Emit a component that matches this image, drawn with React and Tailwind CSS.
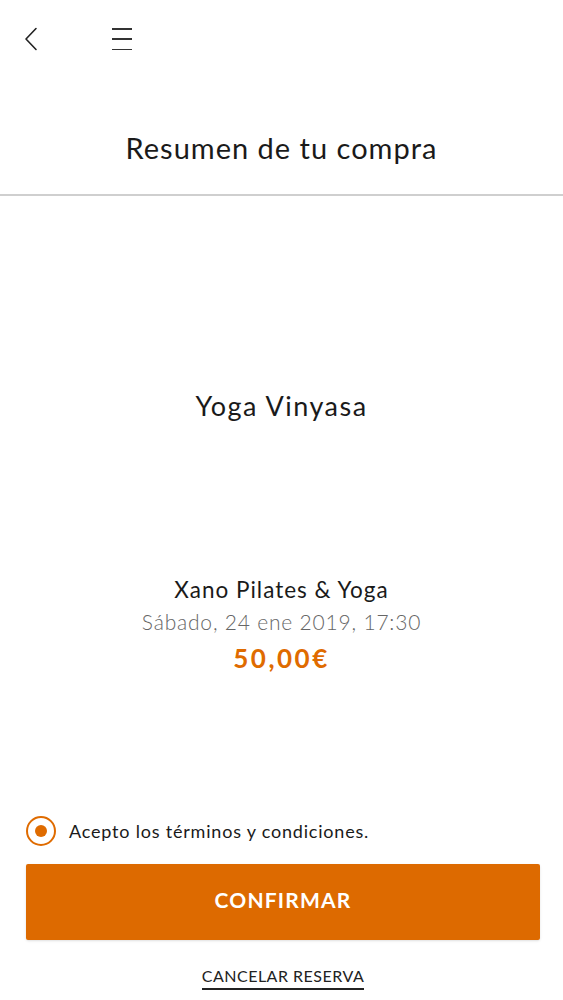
import React from "react";

export default function App() {
  const font = { fontFamily: "Lato, 'Open Sans', sans-serif" };

  return (
    <div className="w-[563px] h-[1000px] bg-white flex flex-col text-[#1a1a1a]" style={font}>
      {/* Top bar */}
      <div className="h-[78px] flex items-center pl-[22px]">
        <button className="w-[18px] h-[26px] flex items-center justify-center">
          <svg width="14" height="24" viewBox="0 0 14 24" fill="none">
            <path d="M12 1.5 L2 12 L12 22.5" stroke="#222" strokeWidth="1.6" strokeLinecap="round" strokeLinejoin="round" />
          </svg>
        </button>
        <button className="ml-[72px] w-[22px] h-[26px] flex flex-col justify-between py-[2px]">
          <span className="block h-[1.5px] w-[20px] bg-[#333]" />
          <span className="block h-[1.5px] w-[20px] bg-[#333]" />
          <span className="block h-[1.5px] w-[20px] bg-[#333]" />
        </button>
      </div>

      {/* Title */}
      <div className="h-[118px] flex items-center justify-center border-b-2 border-[#cfcfcf]">
        <h1 className="text-[29px] leading-none font-normal tracking-[1px] mt-[22px]">Resumen de tu compra</h1>
      </div>

      {/* Content */}
      <div className="flex-1 flex flex-col items-center">
        <h2 className="mt-[196px] text-[27px] leading-none font-normal tracking-[1.5px]">Yoga Vinyasa</h2>

        <div className="mt-[155px] flex flex-col items-center">
          <p className="text-[22.5px] leading-[31px] tracking-[1px]">Xano Pilates &amp; Yoga</p>
          <p className="text-[21px] leading-[33px] font-light tracking-[0.8px] text-[#666]">Sábado, 24 ene 2019, 17:30</p>
          <p className="text-[26px] leading-[40px] font-bold tracking-[2.5px] text-[#df6b00]">50,00€</p>
        </div>

        <div className="mt-auto w-full pl-[26px] pr-[23px] pb-[10px]">
          <label className="flex items-center gap-[13px] mb-[18px]">
            <span className="w-[30px] h-[30px] rounded-full border-2 border-[#df6b00] flex items-center justify-center">
              <span className="w-[12px] h-[12px] rounded-full bg-[#df6b00]" />
            </span>
            <span className="text-[18px] tracking-[0.8px]">Acepto los términos y condiciones.</span>
          </label>

          <button className="w-full h-[76px] pb-[4px] bg-[#dd6a00] rounded-[2px] text-white text-[21px] font-bold tracking-[1.2px] shadow-sm">
            CONFIRMAR
          </button>

          <div className="flex justify-center mt-[26px]">
            <button className="text-[16px] leading-[20px] tracking-[0.5px] text-[#222] border-b-2 border-[#222] pb-[2px]">
              CANCELAR RESERVA
            </button>
          </div>
        </div>
      </div>
    </div>
  );
}
